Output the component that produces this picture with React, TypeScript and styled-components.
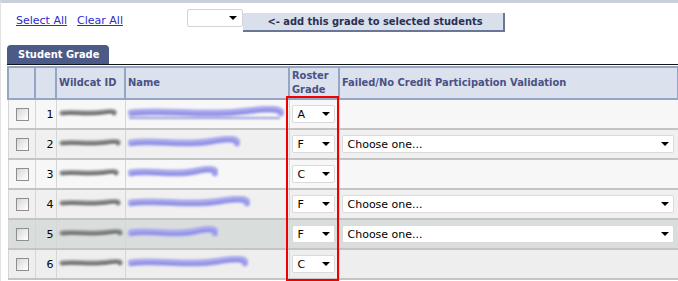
import * as React from 'react'
import styled, { createGlobalStyle } from 'styled-components'

interface IRow {
  n: number
  grade: string
  failed: boolean
  idWidth: number
  nameWidth: number
  bg: string
  underline?: boolean
}

const rows: IRow[] = [
  { n: 1, grade: 'A', failed: false, idWidth: 58, nameWidth: 156, bg: '#f7f7f7', underline: true },
  { n: 2, grade: 'F', failed: true, idWidth: 62, nameWidth: 112, bg: '#f0f0f0' },
  { n: 3, grade: 'C', failed: false, idWidth: 60, nameWidth: 90, bg: '#f7f7f7' },
  { n: 4, grade: 'F', failed: true, idWidth: 62, nameWidth: 122, bg: '#f0f0f0' },
  { n: 5, grade: 'F', failed: true, idWidth: 64, nameWidth: 90, bg: '#d9dedd' },
  { n: 6, grade: 'C', failed: false, idWidth: 64, nameWidth: 120, bg: '#eeeeee' },
]

const boldFont = `"DejaVu Sans Condensed", "DejaVu Sans", Verdana, sans-serif`

const GlobalStyle = createGlobalStyle`
  html, body {
    margin: 0;
    padding: 0;
    background: #ffffff;
  }
  body {
    font-family: "DejaVu Sans", Verdana, sans-serif;
    font-size: 11px;
  }
`

// blurred-out personal data, drawn as a smudged wave
const Smudge = ({ width, color, wave, thick, core, underline }: { width: number, color: string, wave: number, thick: number, core: string, underline?: boolean }) => {
  const mid = 7
  const d = `M3 ${mid} C ${width * 0.25} ${mid - wave}, ${width * 0.5} ${mid + wave}, ${width * 0.75} ${mid - wave * 0.5} S ${width - 3} ${mid}, ${width - 3} ${mid}`
  return (
    <SmudgeSvg width={width} height={16} viewBox={`0 0 ${width} 16`}>
      <path d={d} stroke={color} strokeWidth={thick} fill="none" strokeLinecap="round" />
      <path d={d} stroke={core} strokeWidth={1} fill="none" opacity={0.7} transform="translate(0 1)" />
      {underline && <line x1={1} y1={12} x2={width - 4} y2={12} stroke="#4444c0" strokeWidth={1} />}
    </SmudgeSvg>
  )
}

const FakeSelect = ({ value, wide }: { value: string, wide?: boolean }) => (
  <SelectBox wide={wide}>
    <span>{value}</span>
    <Arrow />
  </SelectBox>
)

export default function App() {
  return (
    <Page>
      <GlobalStyle />
      <Toolbar>
        <Link>Select All</Link>
        <Link>Clear All</Link>
        <TopSelect>
          <span />
          <Arrow />
        </TopSelect>
        <AddButton>&lt;- add this grade to selected students</AddButton>
      </Toolbar>
      <Section>
        <Tab>Student Grade</Tab>
        <TableWrap>
          <Grid>
            <colgroup>
              <col style={{ width: 27 }} />
              <col style={{ width: 21 }} />
              <col style={{ width: 69 }} />
              <col style={{ width: 164 }} />
              <col style={{ width: 50 }} />
              <col style={{ width: 339 }} />
            </colgroup>
            <thead>
              <tr>
                <Th />
                <Th />
                <Th>Wildcat ID</Th>
                <Th>Name</Th>
                <Th>Roster<br />Grade</Th>
                <Th>Failed/No Credit Participation Validation</Th>
              </tr>
            </thead>
            <tbody>
              {rows.map((r) => (
                <Tr key={r.n} bg={r.bg}>
                  <Td><Check /></Td>
                  <NumTd>{r.n}</NumTd>
                  <Td><Smudge width={r.idWidth} color="#8d8d8d" core="#333" wave={1.5} thick={5} /></Td>
                  <Td><Smudge width={r.nameWidth} color="#a9a9ee" core="#5555cc" wave={3.5} thick={7} underline={r.underline} /></Td>
                  <GradeTd><FakeSelect value={r.grade} /></GradeTd>
                  <FailTd>{r.failed && <FakeSelect value="Choose one..." wide={true} />}</FailTd>
                </Tr>
              ))}
            </tbody>
          </Grid>
          <Highlight />
        </TableWrap>
      </Section>
    </Page>
  )
}

const Page = styled.div`
  width: 678px;
  height: 281px;
  box-sizing: border-box;
  border-top: 3px solid #c9cfdb;
  border-left: 1px solid #e2e2e2;
  overflow: hidden;
`

const Toolbar = styled.div`
  display: flex;
  align-items: flex-start;
  padding-left: 15px;
  height: 31px;
`

const Link = styled.a`
  color: #2b2bd0;
  text-decoration: underline;
  margin-top: 11px;
  margin-right: 10px;
  cursor: pointer;
`

const Arrow = styled.span`
  width: 0;
  height: 0;
  border-left: 4px solid transparent;
  border-right: 4px solid transparent;
  border-top: 4px solid #000;
`

const TopSelect = styled.div`
  margin-left: 54px;
  margin-top: 6px;
  width: 56px;
  height: 18px;
  box-sizing: border-box;
  border: 1px solid #d4d4d4;
  border-radius: 2px;
  background: #fff;
  display: flex;
  align-items: center;
  justify-content: space-between;
  padding: 0 5px 0 4px;
`

const AddButton = styled.div`
  margin-top: 10px;
  width: 262px;
  height: 19px;
  box-sizing: border-box;
  background: #d9e0ec;
  border-right: 2px solid #6a7696;
  border-bottom: 2px solid #6a7696;
  color: #2a3150;
  font-family: ${boldFont};
  font-weight: bold;
  display: flex;
  align-items: center;
  justify-content: center;
  padding-left: 4px;
  white-space: nowrap;
`

const Section = styled.div`
  margin-top: 11px;
  padding-left: 6px;
`

const Tab = styled.div`
  display: inline-block;
  width: 102px;
  height: 19px;
  box-sizing: border-box;
  background: #4c5a88;
  color: #ffffff;
  font-family: ${boldFont};
  font-weight: bold;
  font-size: 11px;
  line-height: 19px;
  padding-left: 11px;
  border-radius: 4px 4px 0 0;
  vertical-align: bottom;
  white-space: nowrap;
`

const TableWrap = styled.div`
  position: relative;
  border-top: 1px solid #111;
  padding-top: 1px;
`

const Grid = styled.table`
  table-layout: fixed;
  width: 670px;
  border-collapse: collapse;
`

const Th = styled.th`
  background: #dbe2ee;
  border: 2px solid #95a5c6;
  color: #4a5184;
  font-family: ${boldFont};
  font-weight: bold;
  text-align: left;
  padding: 0 2px;
  height: 30px;
  line-height: 14px;
  white-space: nowrap;
`

const Tr = styled.tr<{ bg: string }>`
  background: ${(p) => p.bg};
  height: 30px;
`

const Td = styled.td`
  border-bottom: 2px solid #c4c4c4;
  border-right: 1px solid #d6d6d6;
  border-left: 1px solid #d6d6d6;
  padding: 0 2px;
  vertical-align: middle;
  overflow: hidden;
`

const NumTd = styled(Td)`
  text-align: right;
  padding-right: 2px;
  color: #000;
`

const GradeTd = styled(Td)`
  padding: 0 2px;
`

const FailTd = styled(Td)`
  padding: 0 2px;
`

const Check = styled.span`
  display: block;
  margin-left: 5px;
  width: 13px;
  height: 13px;
  box-sizing: border-box;
  border: 1px solid #8f8f8f;
  background: linear-gradient(135deg, #d6d6d6 0%, #f4f4f4 70%, #ffffff 100%);
`

const SmudgeSvg = styled.svg`
  display: block;
  filter: blur(1.3px);
`

const SelectBox = styled.div<{ wide?: boolean }>`
  width: ${(p) => (p.wide ? '332px' : '43px')};
  height: 18px;
  box-sizing: border-box;
  border: 1px solid #dadada;
  border-radius: 2px;
  background: #ffffff;
  display: flex;
  align-items: center;
  justify-content: space-between;
  padding: 0 4px 0 5px;
  color: #000;
`

const Highlight = styled.div`
  position: absolute;
  left: 279px;
  top: 31px;
  width: 53px;
  height: 185px;
  border: 2px solid #f00000;
  box-sizing: border-box;
  pointer-events: none;
`
